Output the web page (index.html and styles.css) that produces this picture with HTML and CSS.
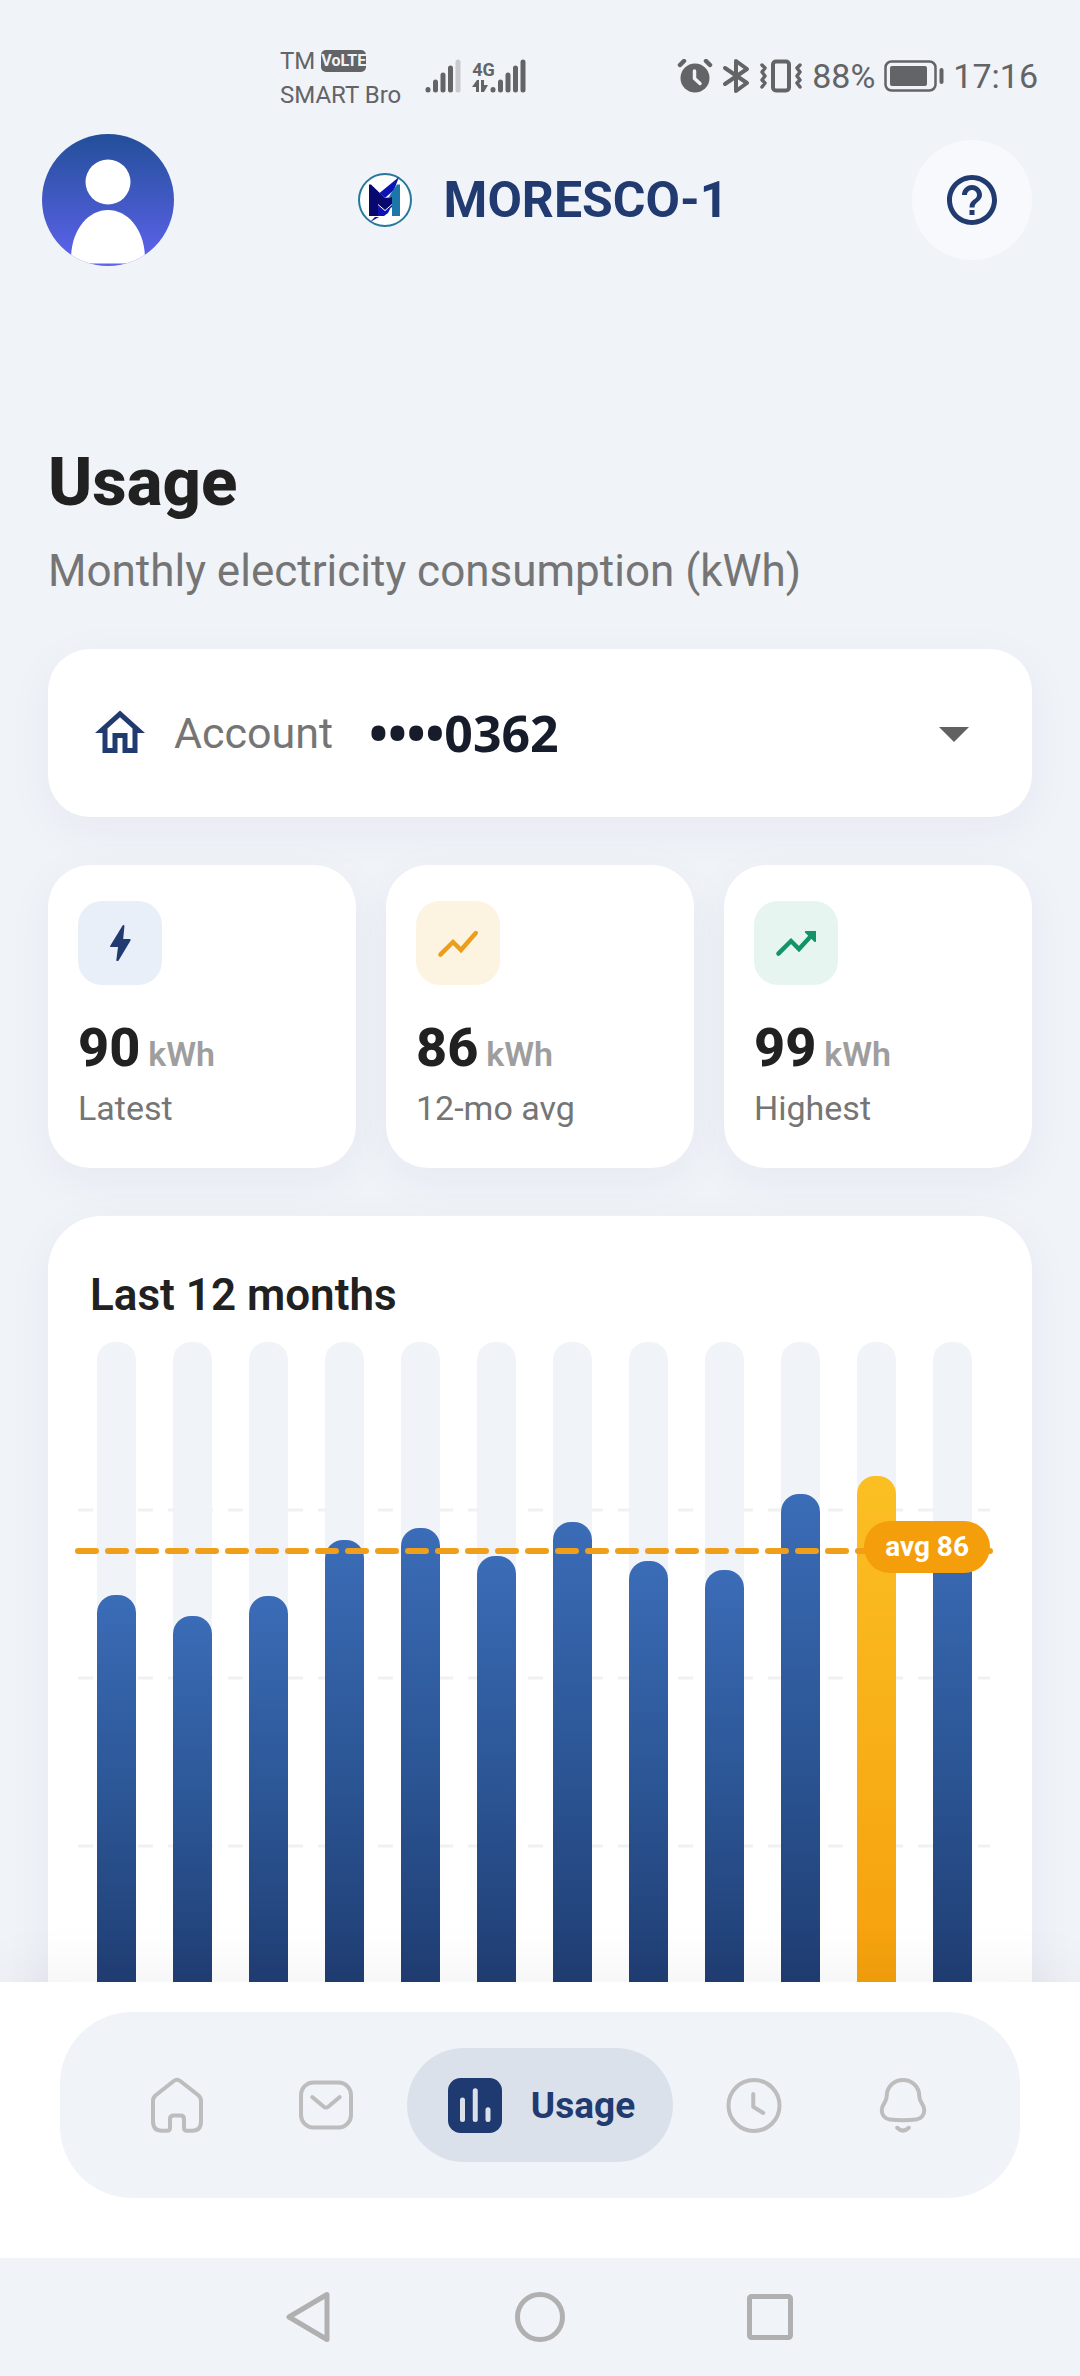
FILE: index.html
```html
<!DOCTYPE html>
<html lang="en">
<head>
  <meta charset="UTF-8" />
  <meta name="viewport" content="width=device-width, initial-scale=1.0" />
  <title>MORESCO-1 Usage</title>
  <link rel="stylesheet" href="styles.css">
</head>
<body>
  <div class="status-bar">
    <div class="carriers">
      <div class="carrier">TM <span class="volte">VoLTE</span></div>
      <div class="carrier">SMART Bro</div>
    </div>
    <div class="signals">
      <svg width="36" height="34" viewBox="0 0 36 34" fill="none" stroke="#636466" stroke-width="5" stroke-linecap="round">
        <path d="M3 30.500v.5M10.500 23v8M18 16v15M25.500 9v22" />
        <path d="M33 3v28" stroke="#c8cacd" />
      </svg>
      <div class="network">
        <span>4G</span>
        <svg width="16" height="12" viewBox="0 0 16 12" fill="#636466"><path d="M0 7 5 0h2v12H4V7zM9 0h3v5h4l-4 7H9z" /></svg>
      </div>
      <svg width="36" height="34" viewBox="0 0 36 34" fill="none" stroke="#636466" stroke-width="5" stroke-linecap="round">
        <path d="M3 30.500v.5M10.500 23v8M18 16v15M25.500 9v22M33 3v28" />
      </svg>
    </div>
    <div class="status-right">
      <svg width="36" height="34" viewBox="0 0 36 34" fill="none" stroke-linecap="round" stroke-linejoin="round">
        <circle cx="18" cy="19" r="14.500" fill="#636466" />
        <path d="M3 6l4-4M33 6l-4-4" stroke="#636466" stroke-width="4.500" />
        <path d="M17.500 12v7.500l5.500 5" stroke="#f0f3f8" stroke-width="3.500" />
      </svg>
      <svg width="28" height="36" viewBox="0 0 28 36" fill="none" stroke="#636466" stroke-width="4" stroke-linecap="round" stroke-linejoin="round">
        <path d="M3 10 25 25 14 33V3l11 8L3 26" />
      </svg>
      <svg width="44" height="34" viewBox="0 0 44 34" fill="none" stroke="#636466" stroke-width="4" stroke-linecap="round" stroke-linejoin="round">
        <rect x="14" y="2.500" width="16" height="29" rx="3" />
        <path d="M3 6l3 3-3 4 3 4-3 4 3 3-3 4M41 6l-3 3 3 4-3 4 3 4-3 3 3 4" stroke-width="3.500" />
      </svg>
      <span>88%</span>
      <svg width="60" height="34" viewBox="0 0 60 34" fill="none">
        <rect x="1.500" y="2.500" width="50" height="29" rx="6" stroke="#636466" stroke-width="2.500" />
        <rect x="6" y="7" width="37" height="20" rx="2" fill="#636466" />
        <path d="M57.500 11v12" stroke="#636466" stroke-width="4" stroke-linecap="round" />
      </svg>
      <span>17:16</span>
    </div>
  </div>

  <header class="header">
    <button class="avatar" aria-label="Profile">
      <svg viewBox="0 0 132 132">
        <defs>
          <linearGradient id="avatarFill" x1="0" y1="0" x2="0" y2="1">
            <stop offset="0" stop-color="#234f99" />
            <stop offset="1" stop-color="#5f63ee" />
          </linearGradient>
          <clipPath id="avatarClip"><circle cx="66" cy="66" r="66" /></clipPath>
        </defs>
        <circle cx="66" cy="66" r="66" fill="url(#avatarFill)" />
        <circle cx="66" cy="48" r="22.500" fill="#fff" />
        <path d="M29 129.500V125C29 96 46 76 66 76s37 20 37 49v4.500z" fill="#fff" clip-path="url(#avatarClip)" />
      </svg>
    </button>
    <div class="brand">
      <svg width="54" height="54" viewBox="0 0 54 54">
        <circle cx="27" cy="27" r="26" fill="#fff" stroke="#24799b" stroke-width="2" />
        <path d="M41 4 36 17 27 25 21.500 20z" fill="#0c12b4" />
        <path d="M12 49l5-5h4z" fill="#0b0e92" />
        <path d="M11 11.500h2L27 25l7-1v10l-7 4-7-5v10h-9z" fill="#08086e" />
        <path d="M20 32.500l7 5.500 6-4-3 6-4 3h-6z" fill="#0c12b4" />
        <path d="M33.500 19.500 39 11.500h3V43h-8V24h-3z" fill="#1b76aa" />
        <path d="M20 31.500l7 6 7-6" fill="none" stroke="#fff" />
      </svg>
      <span>MORESCO-1</span>
    </div>
    <button class="help" aria-label="Help">
      <svg width="60" height="60" viewBox="0 0 24 24" fill="#213b70"><path d="M11 18h2v-2h-2v2zm1-16C6.480 2 2 6.480 2 12s4.480 10 10 10 10-4.480 10-10S17.520 2 12 2zm0 18c-4.410 0-8-3.590-8-8s3.590-8 8-8 8 3.590 8 8-3.590 8-8 8zm0-14c-2.210 0-4 1.790-4 4h2c0-1.100.9-2 2-2s2 .9 2 2c0 2-3 1.750-3 5h2c0-2.250 3-2.500 3-5 0-2.210-1.790-4-4-4z" /></svg>
    </button>
  </header>

  <main class="content">
    <h1>Usage</h1>
    <p class="subtitle">Monthly electricity consumption (kWh)</p>

    <div class="card account">
      <svg width="60" height="60" viewBox="0 0 24 24" fill="#213b70"><path d="M12 5.690l5 4.500V18h-2v-6H9v6H7v-7.810l5-4.500M12 3L2 12h3v8h6v-6h2v6h6v-8h3L12 3z" /></svg>
      <label for="account">Account</label>
      <select id="account">
        <option>••••0362</option>
      </select>
      <svg width="72" height="72" viewBox="0 0 24 24" fill="#616161"><path d="M7 10l5 5 5-5z" /></svg>
    </div>

    <section class="stats">
      <div class="card stat">
        <div class="stat-icon blue">
          <svg width="48" height="48" viewBox="0 0 24 24" fill="#213b70"><path d="M10.700 21c-.5 0-.6-.3-.5-.8L11 14H7.500c-.5 0-.6-.4-.3-.8L13.300 3.300c.4-.6 1-.4.9.3L13.600 10h3.200c.5 0 .7.400.4.900L11.300 20.700c-.2.200-.4.300-.6.300z" /></svg>
        </div>
        <p class="value">90<span>kWh</span></p>
        <p class="label">Latest</p>
      </div>
      <div class="card stat">
        <div class="stat-icon amber">
          <svg width="48" height="48" viewBox="0 0 24 24" fill="none" stroke="#eb9d1b" stroke-width="2.200" stroke-linecap="round"><path d="M3.200 17.800 9.500 11.500l4 4L20.900 7" /></svg>
        </div>
        <p class="value">86<span>kWh</span></p>
        <p class="label">12-mo avg</p>
      </div>
      <div class="card stat">
        <div class="stat-icon green">
          <svg width="48" height="48" viewBox="0 0 24 24" fill="none" stroke="#129468" stroke-width="2.200" stroke-linecap="round"><path d="M3.200 17.300 9.500 11l4 4L19.500 8.500" /><path d="M16.800 6H22v5.200c-.3.500-.7.400-1 .1l-4.400-4.400c-.3-.4-.2-.7.200-.9z" fill="#129468" stroke="none" /></svg>
        </div>
        <p class="value">99<span>kWh</span></p>
        <p class="label">Highest</p>
      </div>
    </section>

    <section class="card chart-card">
      <h2>Last 12 months</h2>
      <div class="chart">
        <svg class="grid-lines" width="100%" height="100%" stroke="#f1f1f2" stroke-width="3" stroke-dasharray="15 15">
          <line x1="0" y1="25%" x2="100%" y2="25%" />
          <line x1="0" y1="50%" x2="100%" y2="50%" />
          <line x1="0" y1="75%" x2="100%" y2="75%" />
        </svg>
        <div class="bars">
          <div class="track"><div class="bar" style="height: 62.3%"></div></div>
          <div class="track"><div class="bar" style="height: 59.2%"></div></div>
          <div class="track"><div class="bar" style="height: 62.2%"></div></div>
          <div class="track"><div class="bar" style="height: 70.5%"></div></div>
          <div class="track"><div class="bar" style="height: 72.3%"></div></div>
          <div class="track"><div class="bar" style="height: 68.2%"></div></div>
          <div class="track"><div class="bar" style="height: 73.2%"></div></div>
          <div class="track"><div class="bar" style="height: 67.4%"></div></div>
          <div class="track"><div class="bar" style="height: 66%"></div></div>
          <div class="track"><div class="bar" style="height: 77.4%"></div></div>
          <div class="track"><div class="bar highest" style="height: 80%"></div></div>
          <div class="track"><div class="bar" style="height: 72.8%"></div></div>
        </div>
        <svg class="avg-line" width="100%" height="100%">
          <line x1="0" y1="31.100%" x2="100%" y2="31.100%" stroke="#f09f1a" stroke-width="6" stroke-linecap="round" stroke-dasharray="18 12" />
        </svg>
        <span class="avg-badge">avg 86</span>
      </div>
    </section>
  </main>

  <nav class="tab-bar">
    <div class="tabs">
      <a class="tab" href="#home" aria-label="Home">
        <svg viewBox="0 0 24 24"><path d="M10.700 2.400 3.600 8Q2.400 9 2.400 10.200V18.500Q2.400 22.300 6 22.300H8Q9.200 22.300 9.200 21.100V17.600Q9.200 16.200 10.600 16.200H13.400Q14.800 16.200 14.800 17.600V21.100Q14.800 22.300 16 22.300H18Q21.600 22.300 21.600 18.500V10.200Q21.600 9 20.400 8L13.300 2.400Q12 1.400 10.700 2.400Z" /></svg>
      </a>
      <a class="tab" href="#messages" aria-label="Messages">
        <svg viewBox="0 0 24 24"><rect x="2" y="3" width="20" height="18" rx="5" /><path d="M6.500 8.800l4.500 3.800q1 .8 2 0l4.500-3.800" /></svg>
      </a>
      <a class="tab active" href="#usage">
        <svg viewBox="0 0 24 24"><rect x="1.200" y="1.200" width="21.600" height="22" rx="5" /><path d="M7 10v7.800M12.100 6.300v11.500M17.200 13.900v3.900" /></svg>
        <span>Usage</span>
      </a>
      <a class="tab" href="#history" aria-label="History">
        <svg viewBox="0 0 24 24"><circle cx="12" cy="12.200" r="10.200" /><path d="M11.700 7.600v5.100l4 2.500" /></svg>
      </a>
      <a class="tab" href="#alerts" aria-label="Alerts">
        <svg viewBox="0 0 24 24"><path d="M12 2C8.300 2 5.500 4.900 5.500 8.300 5.500 11.400 3.500 11.200 3.500 14.200 3.500 16 4.800 17.600 6.700 17.800 10 18.200 14 18.200 17.300 17.800 19.200 17.600 20.500 16 20.500 14.200 20.500 11.200 18.500 11.400 18.500 8.300 18.500 4.900 15.700 2 12 2Z" /><path d="M9.700 21.100q2.300 2.300 4.600 0" /></svg>
      </a>
    </div>
  </nav>

  <div class="system-bar">
    <button aria-label="Back"><svg width="52" height="52" viewBox="0 0 52 52"><path d="M43 3.500v45L5 26z" /></svg></button>
    <button aria-label="Home screen"><svg width="52" height="52" viewBox="0 0 52 52"><circle cx="26" cy="26" r="22.500" /></svg></button>
    <button aria-label="Recent apps"><svg width="52" height="52" viewBox="0 0 52 52"><rect x="5.500" y="5.500" width="41" height="41" rx="2" /></svg></button>
  </div>
</body>
</html>
```
FILE: styles.css
```css
* {
  box-sizing: border-box;
}
body {
  font-family: Roboto, sans-serif;
  background: #f0f3f8;
  color: #212121;
  margin: 0;
  height: 100vh;
  display: flex;
  flex-direction: column;
  overflow: hidden;
}
h1, h2, p {
  margin: 0;
}
button {
  border: none;
  padding: 0;
  background: none;
  cursor: pointer;
}
svg {
  display: block;
  flex-shrink: 0;
}

/* status bar */
.status-bar {
  display: flex;
  align-items: flex-start;
  padding: 44px 42px 0 280px;
  color: #636466;
}
.carrier {
  display: flex;
  align-items: center;
  gap: 6px;
  font-size: 24px;
  font-weight: 400;
  line-height: 34px;
  white-space: nowrap;
}
.volte {
  background: #636466;
  color: #f0f3f8;
  font-size: 16px;
  font-weight: 700;
  line-height: 22px;
  border-radius: 5px;
}
.signals {
  display: flex;
  align-items: center;
  height: 64px;
  margin-left: 24px;
}
.network {
  margin-left: 11px;
  font-size: 18px;
  font-weight: 700;
  line-height: 20px;
  width: 18px;
}
.network span {
  display: block;
}
.status-right {
  display: flex;
  align-items: center;
  gap: 9px;
  height: 64px;
  margin-left: auto;
  font-size: 34px;
  font-weight: 400;
}

/* header */
.header {
  display: flex;
  align-items: center;
  justify-content: space-between;
  padding: 22px 48px 0 42px;
}
.avatar {
  width: 132px;
  height: 132px;
}
.brand {
  display: flex;
  align-items: center;
  gap: 32px;
  color: #213b70;
  font-size: 50px;
  font-weight: 700;
}
.help {
  display: flex;
  align-items: center;
  justify-content: center;
  width: 120px;
  height: 120px;
  border-radius: 50%;
  background: #f7f9fd;
}

/* content */
.content {
  flex: 1;
  min-height: 0;
  overflow: hidden;
  padding: 176px 48px 0;
}
h1 {
  font-size: 67px;
  font-weight: 800;
  line-height: 80px;
}
.subtitle {
  margin-top: 24px;
  font-size: 44px;
  line-height: 50px;
  color: #757575;
}
.card {
  background: #fff;
  border-radius: 42px;
  box-shadow: 0 12px 48px rgba(30, 40, 70, 0.05);
}
.account {
  display: flex;
  align-items: center;
  margin-top: 53px;
  padding: 48px 42px;
}
.account label {
  margin-left: 24px;
  font-size: 43px;
  color: #757575;
}
.account select {
  flex: 1;
  appearance: none;
  margin-left: 36px;
  padding: 0;
  border: none;
  background: none;
  color: #171c2b;
  font-family: "Noto Sans", sans-serif;
  font-size: 50px;
  font-weight: 700;
}
.stats {
  display: grid;
  grid-template-columns: repeat(3, 1fr);
  gap: 30px;
  margin-top: 48px;
}
.stat {
  padding: 36px 30px 40px;
}
.stat-icon {
  display: flex;
  align-items: center;
  justify-content: center;
  width: 84px;
  height: 84px;
  border-radius: 24px;
}
.blue {
  background: #e8eff9;
}
.amber {
  background: #fdf3e1;
}
.green {
  background: #e6f5ef;
}
.value {
  margin-top: 31px;
  font-size: 54px;
  font-weight: 800;
  line-height: 64px;
}
.value span {
  margin-left: 8px;
  font-size: 34px;
  font-weight: 600;
  line-height: 34px;
  color: #9e9e9e;
}
.label {
  margin-top: 8px;
  font-size: 34px;
  line-height: 40px;
  color: #757575;
}

/* chart */
.chart-card {
  margin-top: 48px;
  padding: 54px 42px 60px 30px;
  border-radius: 54px;
}
h2 {
  margin-left: 12px;
  font-size: 44px;
  font-weight: 600;
  line-height: 50px;
}
.chart {
  position: relative;
  height: 672px;
  margin-top: 22px;
}
.grid-lines, .avg-line {
  position: absolute;
  inset: 0;
  overflow: visible;
}
.bars {
  position: relative;
  display: flex;
  justify-content: space-around;
  height: 100%;
}
.track {
  display: flex;
  align-items: flex-end;
  width: 39px;
  border-radius: 18px;
  background: #f0f3f8;
}
.bar {
  width: 100%;
  border-radius: 18px 18px 0 0;
  background: linear-gradient(#3b6cb7, #2b5594 50%, #1e3a6e);
}
.highest {
  background: linear-gradient(#fbbf24, #f59e0b);
}
.avg-badge {
  position: absolute;
  right: 0;
  top: 26.600%;
  padding: 0 21px;
  border-radius: 26px;
  background: #f59e0b;
  color: #fff;
  font-size: 28px;
  font-weight: 700;
  line-height: 52px;
}

/* bottom navigation */
.tab-bar {
  position: relative;
  padding: 30px 60px 60px;
  background: #fff;
  box-shadow: 0 -6px 60px rgba(0, 0, 0, 0.06);
}
.tabs {
  display: flex;
  justify-content: space-evenly;
  padding: 36px;
  border-radius: 72px;
  background: #f0f3f8;
}
.tab {
  display: flex;
  align-items: center;
  gap: 26px;
  padding: 27px 38px;
  border-radius: 57px;
  color: #213b70;
  font-size: 37px;
  font-weight: 700;
  text-decoration: none;
}
.tab svg {
  width: 60px;
  height: 60px;
  fill: none;
  stroke: #bdbdbd;
  stroke-width: 1.600;
  stroke-linecap: round;
  stroke-linejoin: round;
}
.active {
  background: #dbe1eb;
}
.tab.active rect {
  fill: #1e3a70;
  stroke: none;
}
.tab.active path {
  stroke: #dbe1eb;
  stroke-width: 2;
}

.system-bar {
  position: relative;
  display: flex;
  justify-content: center;
  gap: 178px;
  padding: 33px 0;
  background: #f0f3f8;
}
.system-bar svg {
  fill: none;
  stroke: #b0b0b1;
  stroke-width: 5;
  stroke-linejoin: round;
}
```
